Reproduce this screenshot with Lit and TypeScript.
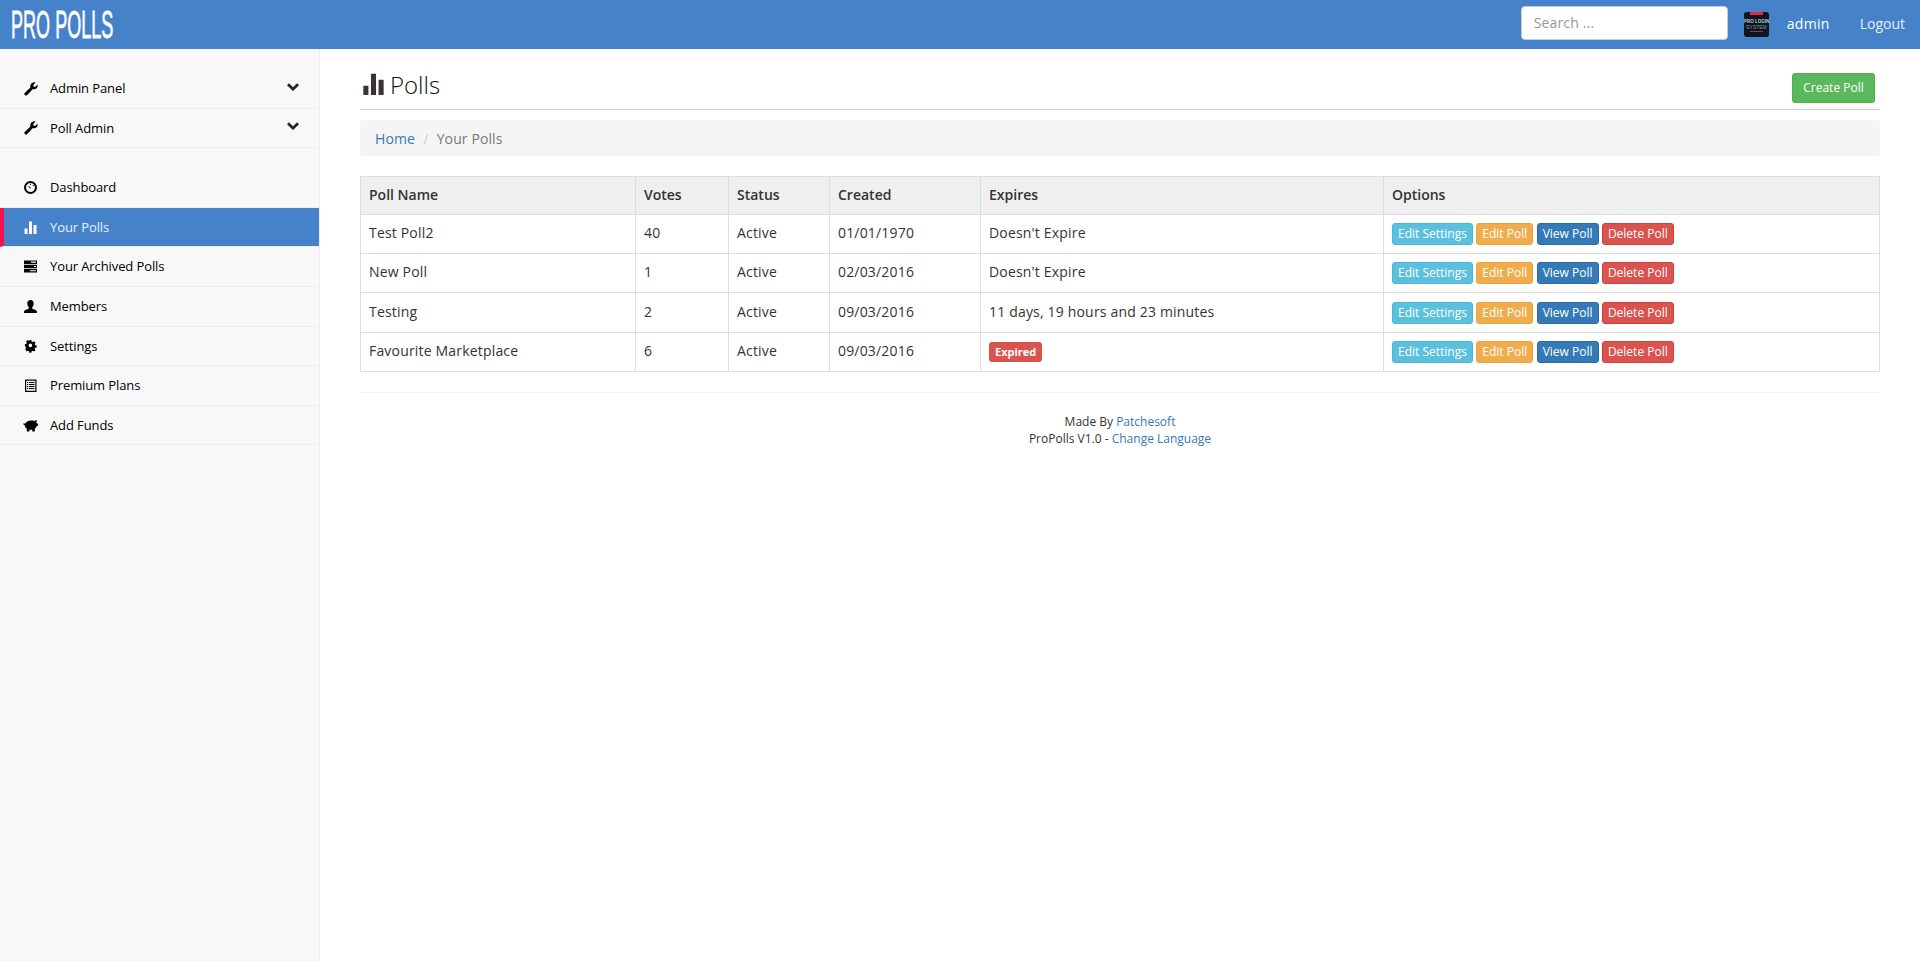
import { LitElement, html, css, svg } from 'lit';
import { customElement } from 'lit/decorators.js';

const icons: Record<string, unknown> = {
  wrench: svg`<path d="M.5 11.200 6.400 5.400C5.800 3.200 6.800 1 9.200.4c.9-.2 1.700-.1 2.300.2L9.200 2.900l.3 1.700 1.700.4 2.300-2.400c.4 1.700-.1 3.400-1.600 4.200-1 .6-2.100.6-3 .3L3 13.200c-.6.500-1.300.500-1.800 0l-.7-.7c-.4-.4-.4-.9 0-1.300Z"/>`,
  dashboard: svg`<path fill-rule="evenodd" d="M6.500 0a6.500 6.500 0 1 1 0 13 6.500 6.500 0 0 1 0-13Zm0 2a4.500 4.500 0 1 0 0 9 4.500 4.500 0 0 0 0-9ZM3.600 4.400l3.400 2.200-.9 1ZM6 2.700h1v1.200H6Zm3.200 1 .8.700-.8.800-.7-.7Z"/>`,
  stats: svg`<path d="M.5 7.500h3V13h-3ZM5 .5h3V13H5ZM9.500 4h3v9h-3Z"/>`,
  tasks: svg`<path fill-rule="evenodd" d="M0 .5h13v3.400H0Zm0 4.300h13v3.400H0Zm0 4.300h13v3.400H0ZM7 1.600v1.100h5V1.600Zm3 4.300v1.100h2V5.900Zm-4 4.300v1.100h6v-1.100Z"/>`,
  user: svg`<path d="M6.500 0C8.600 0 9.700 1.500 9.700 3.500c0 1.500-.7 3-1.500 3.800v1.200c0 .6 4.800 1.300 4.800 3V13H0v-1.500c0-1.700 4.800-2.400 4.800-3V7.300C4 6.500 3.300 5 3.300 3.500 3.300 1.500 4.400 0 6.500 0Z"/>`,
  cog: svg`<path fill-rule="evenodd" transform="translate(.9 .9) scale(.84)" d="M5.300.2h2.400l.4 1.900 1.300.5 1.600-1 1.600 1.700-1 1.500.6 1.300 1.800.5v2.400l-1.800.4-.6 1.300 1 1.600-1.600 1.600-1.600-1-1.300.6-.4 1.800H5.300l-.4-1.800-1.300-.6-1.600 1L.4 10.800l1-1.600-.6-1.300L0 7.500V5.100l1.800-.5.600-1.300-1-1.500L3 .1l1.600 1 1.300-.5ZM6.500 4.300a2.200 2.200 0 1 0 0 4.400 2.200 2.200 0 0 0 0-4.400Z"/>`,
  list: svg`<path fill-rule="evenodd" d="M1 .5h11.500v12.500H1Zm1.200 1.200v10.100h9.100V1.700ZM3 3h1.300v1H3Zm2 0h5.500v1H5ZM3 5h1.300v1H3Zm2 0h5.500v1H5ZM3 7h1.300v1H3Zm2 0h5.500v1H5ZM3 9h1.300v1H3Zm2 0h5.500v1H5Z"/>`,
  piggy: svg`<path transform="translate(-1 -.9) scale(1.16)" d="M0 4.800c.6-.2 1.300-.3 2-.2C3 3 4.800 2 7 2c1 0 1.900.1 2.600.5.500-.5 1.500-.8 2.400-.7l-.5 2 1.700 1.800v.6L12 6.800c-.4 1-1 1.700-1.800 2.200V11.500H8V10H5.500v1.500H3.300V9.200C2.200 8.500 1.600 7.400 1.500 6.200 1 6 .5 5.500 0 4.800Z"/>`,
};

const nav1 = [
  { label: 'Admin Panel', icon: 'wrench', caret: true },
  { label: 'Poll Admin', icon: 'wrench', caret: true },
];
const nav2 = [
  { label: 'Dashboard', icon: 'dashboard' },
  { label: 'Your Polls', icon: 'stats', active: true },
  { label: 'Your Archived Polls', icon: 'tasks' },
  { label: 'Members', icon: 'user' },
  { label: 'Settings', icon: 'cog' },
  { label: 'Premium Plans', icon: 'list' },
  { label: 'Add Funds', icon: 'piggy' },
];
const polls = [
  { name: 'Test Poll2', votes: 40, created: '01/01/1970', expires: "Doesn't Expire" },
  { name: 'New Poll', votes: 1, created: '02/03/2016', expires: "Doesn't Expire" },
  { name: 'Testing', votes: 2, created: '09/03/2016', expires: '11 days, 19 hours and 23 minutes' },
  { name: 'Favourite Marketplace', votes: 6, created: '09/03/2016', expires: '' },
];

@customElement('app-root')
export class AppRoot extends LitElement {
  static styles = css`
    :host {
      display: block;
      min-height: 961px;
      font-family: 'Open Sans', sans-serif;
      font-size: 14px;
      line-height: 1.42857;
      color: #333;
      background: #fff;
    }
    a { text-decoration: none; color: #337ab7; }
    .top {
      height: 49px;
      background: #4582c9;
      display: flex;
      align-items: center;
      color: #fff;
      overflow: hidden;
    }
    .logo {
      font-family: 'Liberation Sans', sans-serif;
      font-size: 39px;
      line-height: 49px;
      margin-left: 11px;
      white-space: nowrap;
      transform: scaleX(0.463);
      transform-origin: left center;
      -webkit-text-stroke: 0.8px #fff;
      text-shadow: 1px 1px 0 rgba(0, 0, 0, 0.15);
      flex: 1;
    }
    .search {
      box-sizing: border-box;
      width: 207px;
      height: 34px;
      margin: -3px 0 0;
      background: #fff;
      border: 1px solid #ccc;
      border-radius: 4px;
      padding: 6px 12px;
      color: #999;
      line-height: 20px;
      letter-spacing: 0.15px;
    }
    .avatar {
      display: block;
      width: 25px;
      height: 25px;
      margin: 0 18px 0 16px;
      border-radius: 2px;
    }
    .admin { letter-spacing: 0.3px; margin-bottom: 1px; }
    .logout { margin: 0 15px 1px 30px; color: #e8edf6; }
    .body { display: flex; min-height: 912px; }
    .side {
      box-sizing: border-box;
      width: 320px;
      flex: none;
      background: #f8f8f8;
      border-right: 1px solid #eee;
      padding-top: 20px;
      color: #000;
      font-size: 13px;
      letter-spacing: -0.1px;
    }
    .menu { margin-bottom: 20px; }
    .item {
      height: 39.6px;
      box-sizing: border-box;
      display: flex;
      align-items: center;
      padding: 0 20px 0 24px;
      border-bottom: 1px solid #eee;
    }
    .item svg { width: 13px; height: 13px; fill: #000; flex: none; margin-right: 13px; overflow: visible; }
    .item .label { flex: 1; }
    .item svg.caret { width: 12px; height: 8px; margin: 0 0 3px; fill: #1c2430; }
    .item.active {
      background: #4582c9;
      color: #e8f0f9;
      border-left: 4px solid #f0134d;
      padding-left: 20px;
    }
    .item.active svg { fill: #fff; }
    .main { flex: 1; min-width: 0; padding: 0 40px; }
    .head {
      height: 61px;
      box-sizing: border-box;
      border-bottom: 1px solid #ccc;
      display: flex;
      align-items: flex-start;
      padding-right: 5px;
    }
    .title {
      flex: 1;
      margin-top: 21px;
      font-size: 24px;
      line-height: 30px;
      font-weight: 300;
      color: #111;
      display: flex;
      align-items: center;
      gap: 5px;
    }
    .title svg { width: 23px; height: 22px; fill: #3a3235; margin-left: 2px; margin-bottom: 2px; }
    .create {
      box-sizing: border-box;
      width: 83px;
      height: 30px;
      margin-top: 24px;
      font-size: 12px;
      line-height: 28px;
      text-align: center;
      background: #5cb85c;
      border: 1px solid #4cae4c;
      border-radius: 3px;
      color: #fff;
    }
    .crumb {
      margin: 10px 0 20px;
      padding: 9px 15px 7px;
      background: #f5f5f5;
      border-radius: 4px;
      color: #777;
      letter-spacing: 0.1px;
    }
    .crumb .sep { color: #ccc; padding: 0 4.5px; }
    table {
      width: 100%;
      border-collapse: collapse;
      table-layout: fixed;
      border: 1px solid #ddd;
    }
    th, td {
      border: 1px solid #ddd;
      text-align: left;
      vertical-align: top;
    }
    th { background: #efefef; font-weight: 600; padding: 8.5px 8px; line-height: 20px; }
    td { padding: 8.13px 8px; line-height: 20px; letter-spacing: 0.18px; }
    .btns { display: flex; gap: 3.4px; letter-spacing: 0; }
    .btn {
      box-sizing: border-box;
      height: 22px;
      padding: 1px 5px;
      font-size: 12px;
      line-height: 18px;
      border: 1px solid;
      border-radius: 3px;
      color: #fff;
      white-space: nowrap;
    }
    .info { background: #5bc0de; border-color: #46b8da; }
    .warning { background: #f0ad4e; border-color: #eea236; }
    .primary { background: #337ab7; border-color: #2e6da4; }
    .danger { background: #d9534f; border-color: #d43f3a; }
    .label-exp {
      display: inline-block;
      height: 20px;
      padding: 0 6px;
      margin-top: 1px;
      background: #d9534f;
      border-radius: 3px;
      color: #fff;
      font-size: 11px;
      font-weight: 700;
      line-height: 20px;
      letter-spacing: 0;
      vertical-align: top;
    }
    hr { border: 0; border-top: 1px solid #eee; margin: 20px 0; }
    .foot { text-align: center; font-size: 12px; line-height: 17px; margin-top: 20px; }
  `;

  icon(name: string) {
    return html`<svg viewBox="0 0 13 13">${icons[name]}</svg>`;
  }

  item(n: { label: string; icon: string; caret?: boolean; active?: boolean }) {
    return html`<div class="item ${n.active ? 'active' : ''}">
      ${this.icon(n.icon)}<span class="label">${n.label}</span>
      ${n.caret
        ? html`<svg class="caret" viewBox="0 0 12 8"><path d="M0 2.200 1.900.3 6 4.300 10.100.3 12 2.200 6 8Z"/></svg>`
        : ''}
    </div>`;
  }

  render() {
    return html`
      <div class="top">
        <div class="logo">PRO POLLS</div>
        <div class="search">Search ...</div>
        <svg class="avatar" viewBox="0 0 25 25">
          <rect width="25" height="25" rx="2" fill="#10151d"/>
          <rect x="6" width="13" height="3" fill="#e0294f"/>
          <text x="12.500" y="10.500" font-size="4.500" font-weight="700" text-anchor="middle" fill="#c6cacd" font-family="Liberation Sans">PRO LOGIN</text>
          <text x="12.500" y="17" font-size="5" text-anchor="middle" fill="#45b3bc" font-family="Liberation Sans">SYSTEM</text>
          <rect x="6" y="19" width="13" height="1" fill="#b52a45"/>
        </svg>
        <span class="admin">admin</span>
        <span class="logout">Logout</span>
      </div>
      <div class="body">
        <aside class="side">
          <div class="menu">${nav1.map((n) => this.item(n))}</div>
          <div>${nav2.map((n) => this.item(n))}</div>
        </aside>
        <main class="main">
          <div class="head">
            <div class="title">${this.icon('stats')}Polls</div>
            <a class="create">Create Poll</a>
          </div>
          <div class="crumb"><a>Home</a> <span class="sep">/</span> Your Polls</div>
          <table>
            <colgroup>
              <col style="width:275px" /><col style="width:93px" /><col style="width:101px" />
              <col style="width:151px" /><col style="width:403px" /><col />
            </colgroup>
            <thead>
              <tr><th>Poll Name</th><th>Votes</th><th>Status</th><th>Created</th><th>Expires</th><th>Options</th></tr>
            </thead>
            <tbody>
              ${polls.map(
                (p) => html`<tr>
                  <td>${p.name}</td>
                  <td>${p.votes}</td>
                  <td>Active</td>
                  <td>${p.created}</td>
                  <td>${p.expires || html`<span class="label-exp">Expired</span>`}</td>
                  <td>
                    <div class="btns">
                      <a class="btn info">Edit Settings</a>
                      <a class="btn warning">Edit Poll</a>
                      <a class="btn primary">View Poll</a>
                      <a class="btn danger">Delete Poll</a>
                    </div>
                  </td>
                </tr>`
              )}
            </tbody>
          </table>
          <hr />
          <div class="foot">
            Made By <a>Patchesoft</a><br />
            ProPolls V1.0 - <a>Change Language</a>
          </div>
        </main>
      </div>
    `;
  }
}
